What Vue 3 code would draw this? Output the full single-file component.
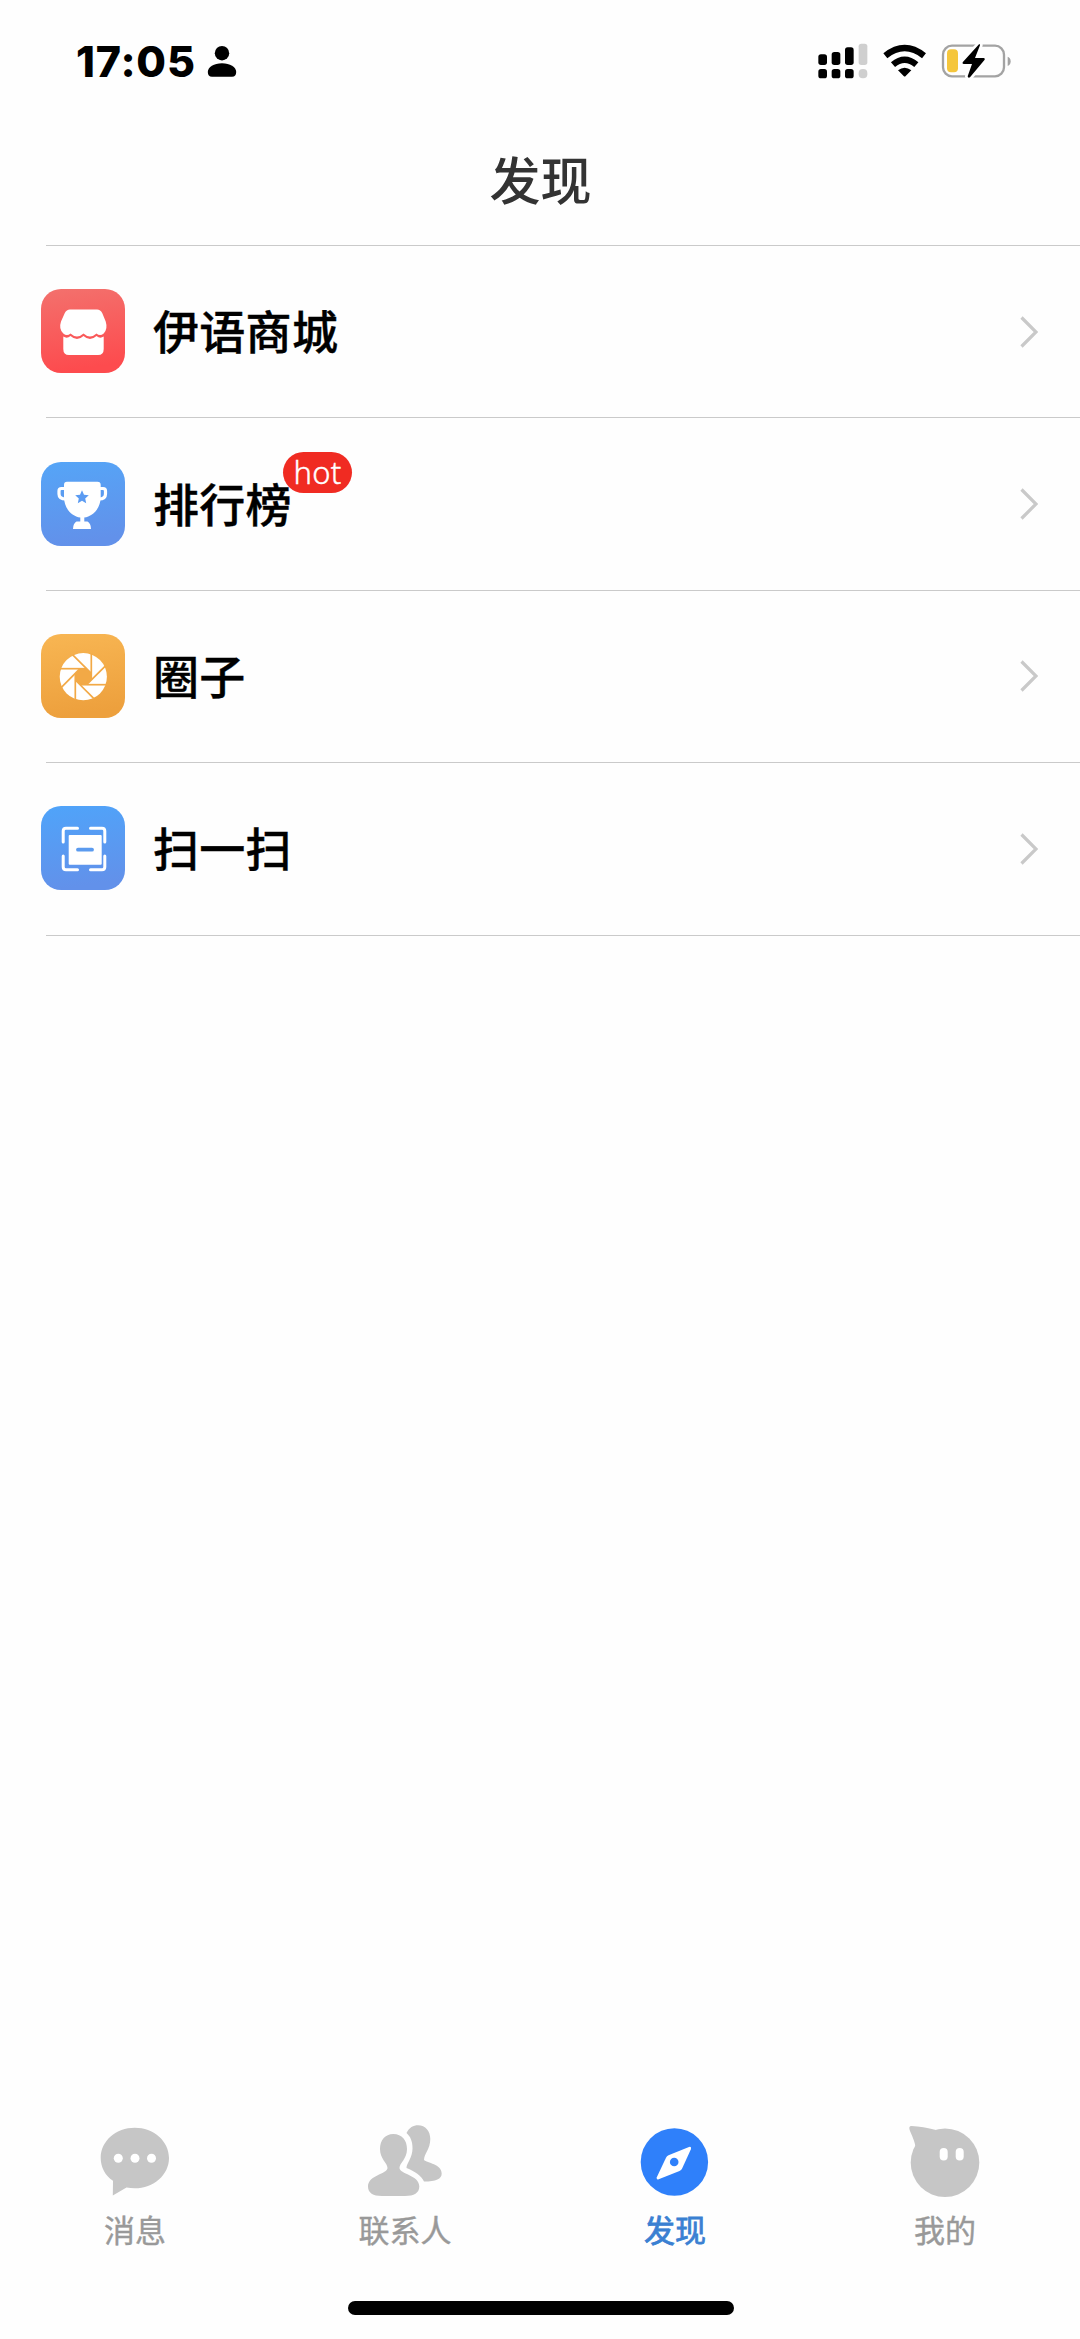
<script setup>
    import { ref } from 'vue';

    //发现页菜单
    const menuList = ref([
        { id: 'shop', name: '伊语商城', colors: ['#f3716d', '#fd4b4e'] },
        { id: 'rank', name: '排行榜', badge: 'hot', colors: ['#55a5f7', '#6291ea'] },
        { id: 'circle', name: '圈子', colors: ['#f8b653', '#eda03d'] },
        { id: 'scan', name: '扫一扫', colors: ['#4fa4fa', '#6291ea'] },
    ])

    //底部导航
    const tabList = ref([
        { id: 'message', name: '消息' },
        { id: 'contact', name: '联系人' },
        { id: 'find', name: '发现' },
        { id: 'mine', name: '我的' },
    ])
    const activeTab = ref('find')
</script>

<template>
    <div class="page">
        <!-- 状态栏 -->
        <div class="status">
            <span class="time">17:05</span>
            <svg class="person" viewBox="0 0 30 32">
                <circle cx="15" cy="8.200" r="7.200" />
                <path d="M.8 27C.8 22 7 18.200 15 18.200S29.200 22 29.200 27Q29.200 31.700 25 31.700H5Q.8 31.700 .8 27Z" />
            </svg>
            <svg class="signal" viewBox="0 0 690 210">
                <!-- 信号 -->
                <rect x="55" y="73" width="26" height="32" rx="8" />
                <rect x="95" y="66" width="26" height="39" rx="8" />
                <rect x="135" y="52" width="26" height="53" rx="8" />
                <rect x="176" y="41" width="26" height="64" rx="8" fill="#cfcfcf" />
                <rect x="55" y="117" width="26" height="28" rx="8" />
                <rect x="95" y="117" width="26" height="28" rx="8" />
                <rect x="135" y="117" width="26" height="28" rx="8" />
                <rect x="176" y="117" width="26" height="28" rx="12" fill="#cfcfcf" />
                <!-- wifi -->
                <path d="M256 77Q314 31 372 77M279 104Q314 74 349 104" fill="none" stroke="#000" stroke-width="19" />
                <path d="M294 121Q314 106 334 121L317 138Q314 141 311 138Z" />
                <!-- 电池 -->
                <rect x="429" y="47" width="183" height="92" rx="27" fill="none" stroke="#a3a3a3" stroke-width="7" />
                <path d="M623 80Q632 83 632 94T623 108Z" fill="#a3a3a3" />
                <rect x="441" y="58" width="33" height="69" rx="12" fill="#f5c63c" />
                <path d="M537 43L488 97Q486 102 491 102H516L503 139Q504 145 510 142L554 89Q556 84 551 84H525L540 46Q541 41 537 43Z" stroke="#fff" stroke-width="16" />
                <path d="M537 43L488 97Q486 102 491 102H516L503 139Q504 145 510 142L554 89Q556 84 551 84H525L540 46Q541 41 537 43Z" />
            </svg>
        </div>

        <!-- 标题 -->
        <div class="title">发现</div>

        <!-- 菜单列表 -->
        <div class="list">
            <div class="row" v-for="item in menuList" :key="item.id">
                <svg class="rowIcon" viewBox="0 0 84 84">
                    <defs>
                        <linearGradient :id="'bg-' + item.id" x1="0" y1="0" x2="0.15" y2="1">
                            <stop offset="0" :stop-color="item.colors[0]" />
                            <stop offset="1" :stop-color="item.colors[1]" />
                        </linearGradient>
                    </defs>
                    <rect width="84" height="84" rx="20" :fill="`url(#bg-${item.id})`" />
                    <g v-if="item.id === 'shop'" fill="#fff">
                        <path d="M29 20.500H56Q59.500 20.500 61.200 24L64.700 32.500Q67 40 62.700 44.500Q59 47.500 55.500 44.500Q49 50.500 42.500 44.500Q36 50.500 29.500 44.500Q26 47.500 22.300 44.500Q17.500 40 20 32.500L23.800 24Q25.500 20.500 29 20.500Z" />
                        <path d="M22.300 47.500Q26 50 29.500 47Q36 53 42.500 47Q49 53 55.500 47Q59 50 62.700 47.500V60Q62.700 66 57 66H28Q22.300 66 22.300 60Z" />
                    </g>
                    <g v-else-if="item.id === 'rank'">
                        <path d="M25 26.500H20.500Q18 26.500 18 29V32Q18 37 25 37M58 26.500H62Q64.500 26.500 64.500 29V32Q64.500 37 58 37" fill="none" stroke="#fff" stroke-width="3.200" />
                        <path d="M26 19.700H56.500Q59.700 19.700 59.700 23V35C59.700 46 52 54.500 43.300 55.500V59.500H46.500Q50 61.500 50 67H32Q32 61.500 35.500 59.500H39.300V55.500C30.500 54.500 23 46 23 35V23Q23 19.700 26 19.700Z" fill="#fff" />
                        <path d="M41 28.200L43 32.700L47.800 33.200L44.200 36.500L45.200 41.300L41 38.800L36.800 41.300L37.800 36.500L34.200 33.200L39 32.700Z" fill="#5b9bf2" />
                    </g>
                    <g v-else-if="item.id === 'circle'" transform="translate(42.3 42.7)">
                        <circle r="23.600" fill="#fff" />
                        <path d="M8 -3.300L3.300 -8H-3.300L-8 -3.300V3.300L-3.300 8H3.300L8 3.300Z" fill="#f2a946" />
                        <path v-for="n in 8" :key="n" d="M8 -23V3.300" :transform="`rotate(${n * 45})`" stroke="#f2a946" stroke-width="1.700" />
                    </g>
                    <g v-else>
                        <path d="M22.200 36V25Q22.200 22.200 25 22.200H36.500M49.500 22.200H61Q63.800 22.200 63.800 25V36M63.800 50V61Q63.800 63.700 61 63.700H49.500M36.500 63.700H25Q22.200 63.700 22.200 61V50" fill="none" stroke="#fff" stroke-width="3" stroke-linecap="round" />
                        <rect x="27.700" y="29" width="33" height="29.800" rx="1" fill="#fff" />
                        <path d="M37 43.700H51" stroke="#5b9bef" stroke-width="3.800" stroke-linecap="round" />
                    </g>
                </svg>
                <span class="rowName">{{ item.name }}<span v-if="item.badge" class="badge">{{ item.badge }}</span></span>
                <svg class="arrow" viewBox="0 0 18 32">
                    <path d="M1.500 1.500L16 16L1.500 30.500" fill="none" stroke="#c9c9c9" stroke-width="3.200" />
                </svg>
            </div>
        </div>

        <!-- 底部导航 -->
        <div class="tabbar">
            <div class="tab" :class="{ active: tab.id === activeTab }" v-for="tab in tabList" :key="tab.id" @click="activeTab = tab.id">
                <svg class="tabIcon" viewBox="0 0 76 76" fill="currentColor">
                    <template v-if="tab.id === 'message'">
                        <path d="M37.800 5.800C56.500 5.800 72 19 72 36S56.500 66.300 37.800 66.300Q33.500 66.300 29.500 65.600L15.800 73.500L16 58.800C8 53.500 3.700 45 3.700 36C3.700 19 19 5.800 37.800 5.800Z" />
                        <circle v-for="x in [21.3, 38, 54.5]" :key="x" :cx="x" cy="36.300" r="4.500" fill="#fff" />
                    </template>
                    <template v-else-if="tab.id === 'contact'">
                        <path d="M26.300 12C35 12 40 18.500 40 27C40 37 32.500 41 32.500 46C32.500 52 52.300 53 52.300 64.500C52.300 71 47 74 38 74H15C6 74 1 71 1 64.500C1 53 20.500 52 20.500 46C20.500 41 13 37 13 27C13 18.500 18 12 26.300 12Z" />
                        <path d="M39.500 11C42 5.500 46.500 3.200 51 3.200C58.500 3.200 63.300 9 63.300 17C63.300 27 57 32 57 38C60 41 74.700 42 74.700 51.500C74.700 57 69 59.500 57 59.500C54 53.500 48 49.500 39.500 46C39.500 41 45.500 36 45.500 26.500C45.500 19.500 43.500 14.500 39.500 11Z" />
                    </template>
                    <template v-else-if="tab.id === 'find'">
                        <circle cx="37.400" cy="40" r="33.700" />
                        <path d="M52 25L31.500 33.300Q29.800 34 29 35.700L19.700 55.500Q19.300 58 21.700 57.200L42.500 49Q44.200 48.300 45 46.700L54 27Q54.500 24.200 52 25Z" fill="#fff" />
                        <circle cx="37.200" cy="40" r="4.300" />
                    </template>
                    <template v-else>
                        <circle cx="38" cy="40.700" r="34.300" />
                        <path d="M4.500 4Q16 4.500 29 8L22 22L8.500 25Q8 20 3 9Q1 4 4.500 4Z" />
                        <rect x="32.700" y="26" width="8" height="12.500" rx="4" fill="#fff" />
                        <rect x="48.700" y="26" width="8" height="12.500" rx="4" fill="#fff" />
                    </template>
                </svg>
                <span class="tabName">{{ tab.name }}</span>
            </div>
        </div>
        <div class="homeBar"></div>
    </div>
</template>

<style>
    body {
        margin: 0;
        background-color: #fefefe;
    }
</style>

<style scoped>
    .page {
        display: flex;
        flex-direction: column;
        width: 1080px;
        height: 2339px;
        background-color: #fefefe;
        font-family: "Noto Sans CJK SC", sans-serif;
        overflow: hidden;
    }

    .status {
        display: flex;
        align-items: flex-start;
        box-sizing: border-box;
        height: 124px;
        padding: 30px 50px 0 76px;
    }

    .time {
        width: 131px;
        margin-top: 6px;
        font-family: Inter, sans-serif;
        font-size: 43px;
        line-height: 50px;
        font-weight: 800;
        letter-spacing: 0.8px;
        white-space: nowrap;
    }

    .person {
        width: 30px;
        height: 32px;
        margin-top: 15px;
    }

    .signal {
        width: 230px;
        height: 70px;
        margin-left: auto;
    }

    .title {
        box-sizing: border-box;
        height: 122px;
        margin-left: 46px;
        padding-right: 45px;
        border-bottom: 1px solid #cacaca;
        font-size: 51px;
        font-weight: 500;
        line-height: 108px;
        text-align: center;
        color: #333;
    }

    .row {
        display: flex;
        align-items: center;
        box-sizing: border-box;
        height: 172.4px;
        margin-left: 46px;
        padding-right: 42px;
        border-bottom: 1px solid #cacaca;
    }

    .rowIcon {
        flex: none;
        width: 84px;
        height: 84px;
        margin: -1px 28px 0 -5px;
    }

    .rowName {
        position: relative;
        margin-top: -5px;
        font-size: 46px;
        font-weight: 500;
        line-height: 60px;
        letter-spacing: 0.3px;
        color: #000;
        -webkit-text-stroke: 0.4px #000;
    }

    /* 角标压在文字右上角 */
    .badge {
        position: absolute;
        left: 130px;
        top: -20px;
        width: 69px;
        height: 41px;
        border-radius: 21px;
        background-color: #f02b22;
        font-family: "Noto Sans", sans-serif;
        font-size: 31px;
        font-weight: 300;
        line-height: 41px;
        text-align: center;
        color: #fff;
        -webkit-text-stroke: 0.4px #fff;
    }

    .arrow {
        width: 18px;
        height: 32px;
        margin-left: auto;
    }

    .tabbar {
        display: flex;
        margin-top: auto;
    }

    .tab {
        display: flex;
        flex: 1;
        flex-direction: column;
        align-items: center;
        color: #c6c6c6;
    }

    .tabIcon {
        width: 76px;
        height: 76px;
    }

    .tabName {
        margin-top: 8px;
        margin-bottom: 2px;
        font-size: 31px;
        line-height: 46px;
        color: #999;
        -webkit-text-stroke: 0.4px #999;
    }

    .active {
        color: #2f80fa;
    }

    .active .tabName {
        color: #3a80d2;
        -webkit-text-stroke: 0.8px #3a80d2;
    }

    .homeBar {
        width: 386px;
        height: 14px;
        margin: 47px auto 24px 348px;
        border-radius: 7px;
        background-color: #000;
    }
</style>
